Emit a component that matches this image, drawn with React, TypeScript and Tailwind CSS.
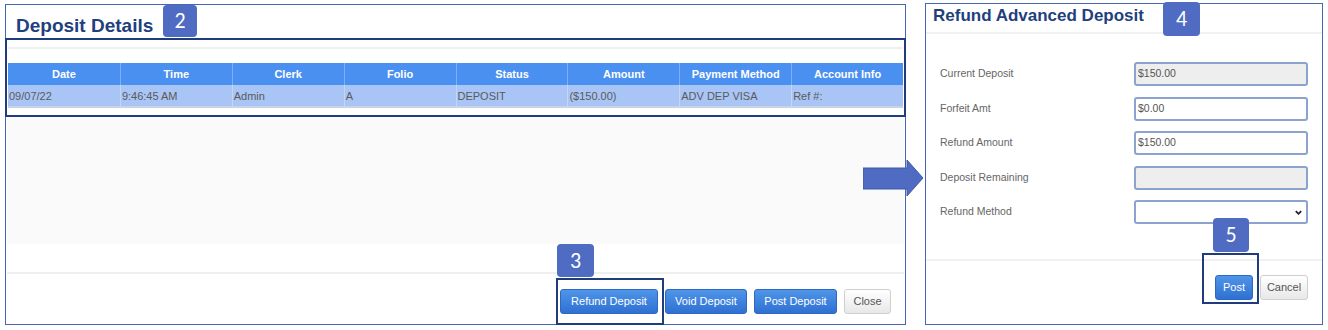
const cols = ['Date', 'Time', 'Clerk', 'Folio', 'Status', 'Amount', 'Payment Method', 'Account Info'];
const row = ['09/07/22', '9:46:45 AM', 'Admin', 'A', 'DEPOSIT', '($150.00)', 'ADV DEP VISA', 'Ref #:'];

const blueBtn =
  'h-[25px] px-0 whitespace-nowrap rounded-[3px] border border-[#2d68c4] bg-gradient-to-b from-[#4f95e8] to-[#2f70d2] text-white text-[11px] leading-none';
const grayBtn =
  'h-[25px] px-0 whitespace-nowrap rounded-[3px] border border-[#cfcfcf] bg-gradient-to-b from-[#ffffff] to-[#e8e8e8] text-[#555] text-[11px] leading-none';

function Badge({ n, className }: { n: string; className: string }) {
  return (
    <div
      className={`absolute flex items-center justify-center rounded-[4px] bg-[#4f6bc2] text-white text-[22px] leading-none ${className}`}
      style={{ fontFamily: 'Calibri, Carlito, "Open Sans", sans-serif' }}
    >
      {n}
    </div>
  );
}

function Field({ label, value, disabled, select }: { label: string; value?: string; disabled?: boolean; select?: boolean }) {
  return (
    <div className="flex items-center justify-between h-[34.5px]">
      <span className="text-[10.5px] text-[#666]">{label}</span>
      <div
        className={`w-[174px] h-[24px] rounded-[3px] border-2 border-[#8ca3cf] flex items-center px-[2px] text-[10.5px] text-[#555] ${disabled ? 'bg-[#eeeeee]' : 'bg-white'}`}
      >
        <span className="flex-1">{value}</span>
        {select && (
          <svg width="9" height="9" viewBox="0 0 10 10" className="mr-[1px]">
            <path d="M2 3.5 L5 6.5 L8 3.5" fill="none" stroke="#222" strokeWidth="2" />
          </svg>
        )}
      </div>
    </div>
  );
}

export default function App() {
  return (
    <div
      className="relative w-[1328px] h-[330px] bg-white overflow-hidden flex items-start gap-[19px] pl-[5px] pt-[3px]"
      style={{ fontFamily: '"Liberation Sans", Arial, sans-serif' }}
    >
      {/* Deposit details panel */}
      <div className="relative mt-[1px] w-[901px] h-[321px] border-[1.5px] border-[#4468b0] flex flex-col">
        <div className="h-[33px] flex items-end pl-[10px] pb-[3px]">
          <h1 className="text-[19px] font-bold text-[#1f3f7e] leading-none">Deposit Details</h1>
        </div>
        <div className="-mx-[1px] h-[79px] border-2 border-[#203c7c] bg-white flex flex-col px-[1px]">
          <div className="mt-[7px] h-[2px] bg-[#efefef]" />
          <div className="mt-[14px] grid grid-cols-8 h-[22px] bg-[#4a90f0] text-white text-[11px] font-bold">
            {cols.map((c, i) => (
              <div key={c} className={`flex items-center justify-center ${i > 0 ? 'border-l border-[#7fb0f5]' : ''}`}>
                {c}
              </div>
            ))}
          </div>
          <div className="grid grid-cols-8 h-[23px] bg-[#a9c5f6] text-[#5a5a5a] text-[11px] border-b-2 border-[#c9d3e3]">
            {row.map((c, i) => (
              <div key={i} className={`pl-[1px] pt-[3px] ${i > 0 ? 'border-l border-[#c3d6f7]' : ''}`}>
                {c}
              </div>
            ))}
          </div>
        </div>
        <div className="mx-[1px] h-[127px] bg-[#fafafa]" />
        <div className="h-[28px]" />
        <div className="mx-[1px] h-[2px] bg-[#efefef]" />
        <div className="flex-1 flex items-start justify-end gap-[7px] pr-[14px] pt-[15px]">
          <button className={`${blueBtn} w-[98px]`}>Refund Deposit</button>
          <button className={`${blueBtn} w-[82px]`}>Void Deposit</button>
          <button className={`${blueBtn} w-[83px]`}>Post Deposit</button>
          <button className={`${grayBtn} w-[47px]`}>Close</button>
        </div>
      </div>

      {/* Refund advanced deposit panel */}
      <div className="w-[398px] h-[322px] border-[1.5px] border-[#4468b0] flex flex-col">
        <div className="h-[30px] pl-[7px] pt-[3px] border-b-2 border-[#f1f1f1]">
          <h2 className="text-[17px] font-bold text-[#1f3f7e] leading-none">Refund Advanced Deposit</h2>
        </div>
        <div className="pl-[14px] pr-[14px] pt-[23px]">
          <Field label="Current Deposit" value="$150.00" disabled />
          <Field label="Forfeit Amt" value="$0.00" />
          <Field label="Refund Amount" value="$150.00" />
          <Field label="Deposit Remaining" disabled />
          <Field label="Refund Method" select />
        </div>
        <div className="mt-[29px] h-[2px] bg-[#f1f1f1]" />
        <div className="flex justify-end gap-[7px] pr-[14px] pt-[14px]">
          <button className={`${blueBtn} w-[38px] h-[24px]`}>Post</button>
          <button className={`${grayBtn} w-[48px] h-[24px]`}>Cancel</button>
        </div>
      </div>

      {/* annotations */}
      <Badge n="2" className="left-[163px] top-[5px] w-[34px] h-[32px]" />
      <Badge n="3" className="left-[557px] top-[244px] w-[37px] h-[33px]" />
      <div className="absolute left-[556px] top-[278px] w-[108px] h-[47px] border-2 border-[#203c7c]" />
      <Badge n="4" className="left-[1163px] top-[2px] w-[37px] h-[34px]" />
      <Badge n="5" className="left-[1213px] top-[218px] w-[36px] h-[34px]" />
      <div className="absolute left-[1202px] top-[253px] w-[57px] h-[51px] border-2 border-[#203c7c]" />
      <svg className="absolute left-[863px] top-[160px]" width="60" height="36" viewBox="0 0 60 36">
        <path d="M0 8 H44 V0 L60 18 L44 36 V29 H0 Z" fill="#4f6bc2" stroke="#3f5aa8" strokeWidth="1" />
      </svg>
    </div>
  );
}
